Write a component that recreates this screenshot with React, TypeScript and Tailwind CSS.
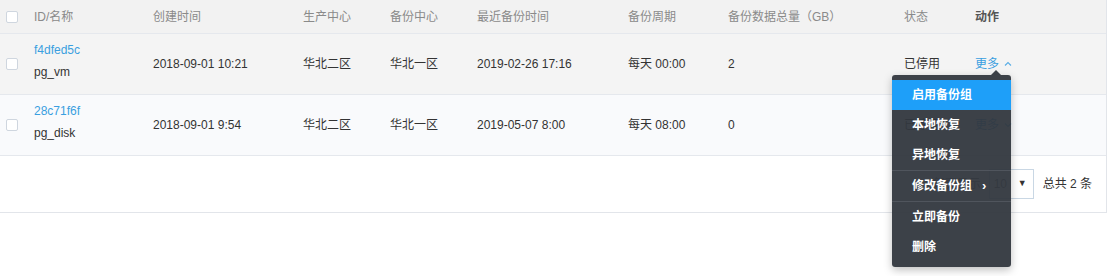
import React from "react";

const cols = ["w-[34px]", "w-[119px]", "w-[150px]", "w-[87px]", "w-[87px]", "w-[151px]", "w-[100px]", "w-[176px]", "w-[71px]", "flex-1"];

function Checkbox() {
  return <div className="ml-[6px] h-[12px] w-[12px] rounded-[2px] border border-[#cfd6df] bg-white" />;
}

function ChevronUp() {
  return (
    <svg width="8" height="6" viewBox="0 0 8 6" className="ml-[5px]">
      <path d="M1 4.5 L4 1.5 L7 4.5" fill="none" stroke="#5aaee6" strokeWidth="1.1" />
    </svg>
  );
}
function ChevronDown() {
  return (
    <svg width="8" height="6" viewBox="0 0 8 6" className="ml-[5px]">
      <path d="M1 1.5 L4 4.5 L7 1.5" fill="none" stroke="#5aaee6" strokeWidth="1.1" />
    </svg>
  );
}

type Row = { id: string; name: string; created: string; prod: string; bak: string; recent: string; period: string; total: string; status: string; open: boolean; bg: string };

const rows: Row[] = [
  { id: "f4dfed5c", name: "pg_vm", created: "2018-09-01 10:21", prod: "华北二区", bak: "华北一区", recent: "2019-02-26 17:16", period: "每天 00:00", total: "2", status: "已停用", open: true, bg: "bg-[#f4f4f4]" },
  { id: "28c71f6f", name: "pg_disk", created: "2018-09-01 9:54", prod: "华北二区", bak: "华北一区", recent: "2019-05-07 8:00", period: "每天 08:00", total: "0", status: "已停用", open: false, bg: "bg-[#f9fafc]" },
];

const menu = ["启用备份组", "本地恢复", "异地恢复", "修改备份组", "立即备份", "删除"];

export default function App() {
  return (
    <div
      className="relative w-[1108px] h-[276px] bg-white text-[12px] text-[#333]"
      style={{ fontFamily: '"Liberation Sans", Arial, "Noto Sans CJK SC", sans-serif' }}
    >
      <div className="w-[1107px] border-r border-b border-[#e2e5ea]">
        {/* header */}
        <div className="flex h-[34px] items-center border-b border-[#e5e8ed] bg-[#f2f2f2] text-[#8a8a8a]">
          <div className={cols[0]}><Checkbox /></div>
          <div className={cols[1]}>ID/名称</div>
          <div className={cols[2]}>创建时间</div>
          <div className={cols[3]}>生产中心</div>
          <div className={cols[4]}>备份中心</div>
          <div className={cols[5]}>最近备份时间</div>
          <div className={cols[6]}>备份周期</div>
          <div className={cols[7]}>备份数据总量（GB）</div>
          <div className={cols[8]}>状态</div>
          <div className={cols[9] + " font-bold text-[#555]"}>动作</div>
        </div>
        {rows.map((r) => (
          <div key={r.id} className={"flex h-[61px] items-center border-b border-[#e5e8ed] " + r.bg}>
            <div className={cols[0]}><Checkbox /></div>
            <div className={cols[1] + " flex flex-col self-stretch justify-center pb-[6px]"}>
              <div className="leading-[22px] text-[#3a9fe0]">{r.id}</div>
              <div className="leading-[22px]">{r.name}</div>
            </div>
            <div className={cols[2]}>{r.created}</div>
            <div className={cols[3]}>{r.prod}</div>
            <div className={cols[4]}>{r.bak}</div>
            <div className={cols[5]}>{r.recent}</div>
            <div className={cols[6]}>{r.period}</div>
            <div className={cols[7]}>{r.total}</div>
            <div className={cols[8]}>{r.status}</div>
            <div className={cols[9] + " flex items-center text-[#3a9fe0]"}>
              <span>更多</span>
              {r.open ? <ChevronUp /> : <ChevronDown />}
            </div>
          </div>
        ))}
        {/* footer */}
        <div className="flex h-[56px] items-center justify-end pr-[14px]">
          <span className="text-[#666]">每页显示</span>
          <div className="ml-[8px] flex h-[30px] w-[45px] items-center justify-between border border-[#c9d7e4] pl-[4px] pr-[6px]">
            <span className="text-[#666]">10</span>
            <span className="text-[9px] text-[#333]">▼</span>
          </div>
          <span className="ml-[9px]">总共 2 条</span>
        </div>
      </div>

      {/* dropdown */}
      <div className="absolute left-[892px] top-[75px] w-[119px] rounded-[3px] bg-[rgba(50,55,62,0.95)] py-[5px] text-white shadow-[0_3px_8px_rgba(0,0,0,0.25)]">
        <div className="absolute -top-[5px] left-[99px] h-0 w-0 border-x-[5px] border-b-[5px] border-x-transparent border-b-[rgba(50,55,62,0.95)]" />
        {menu.map((m, i) => (
          <div
            key={m}
            className={
              "flex h-[30px] items-center pl-[20px] font-bold " +
              (i === 0 ? "bg-[#1e9ff9] " : "") +
              (i === 3 ? "border-y border-[#50555d] h-[32px] " : "")
            }
          >
            <span>{m}</span>
            {i === 3 && <span className="ml-[10px] text-[13px]">›</span>}
          </div>
        ))}
      </div>
    </div>
  );
}
